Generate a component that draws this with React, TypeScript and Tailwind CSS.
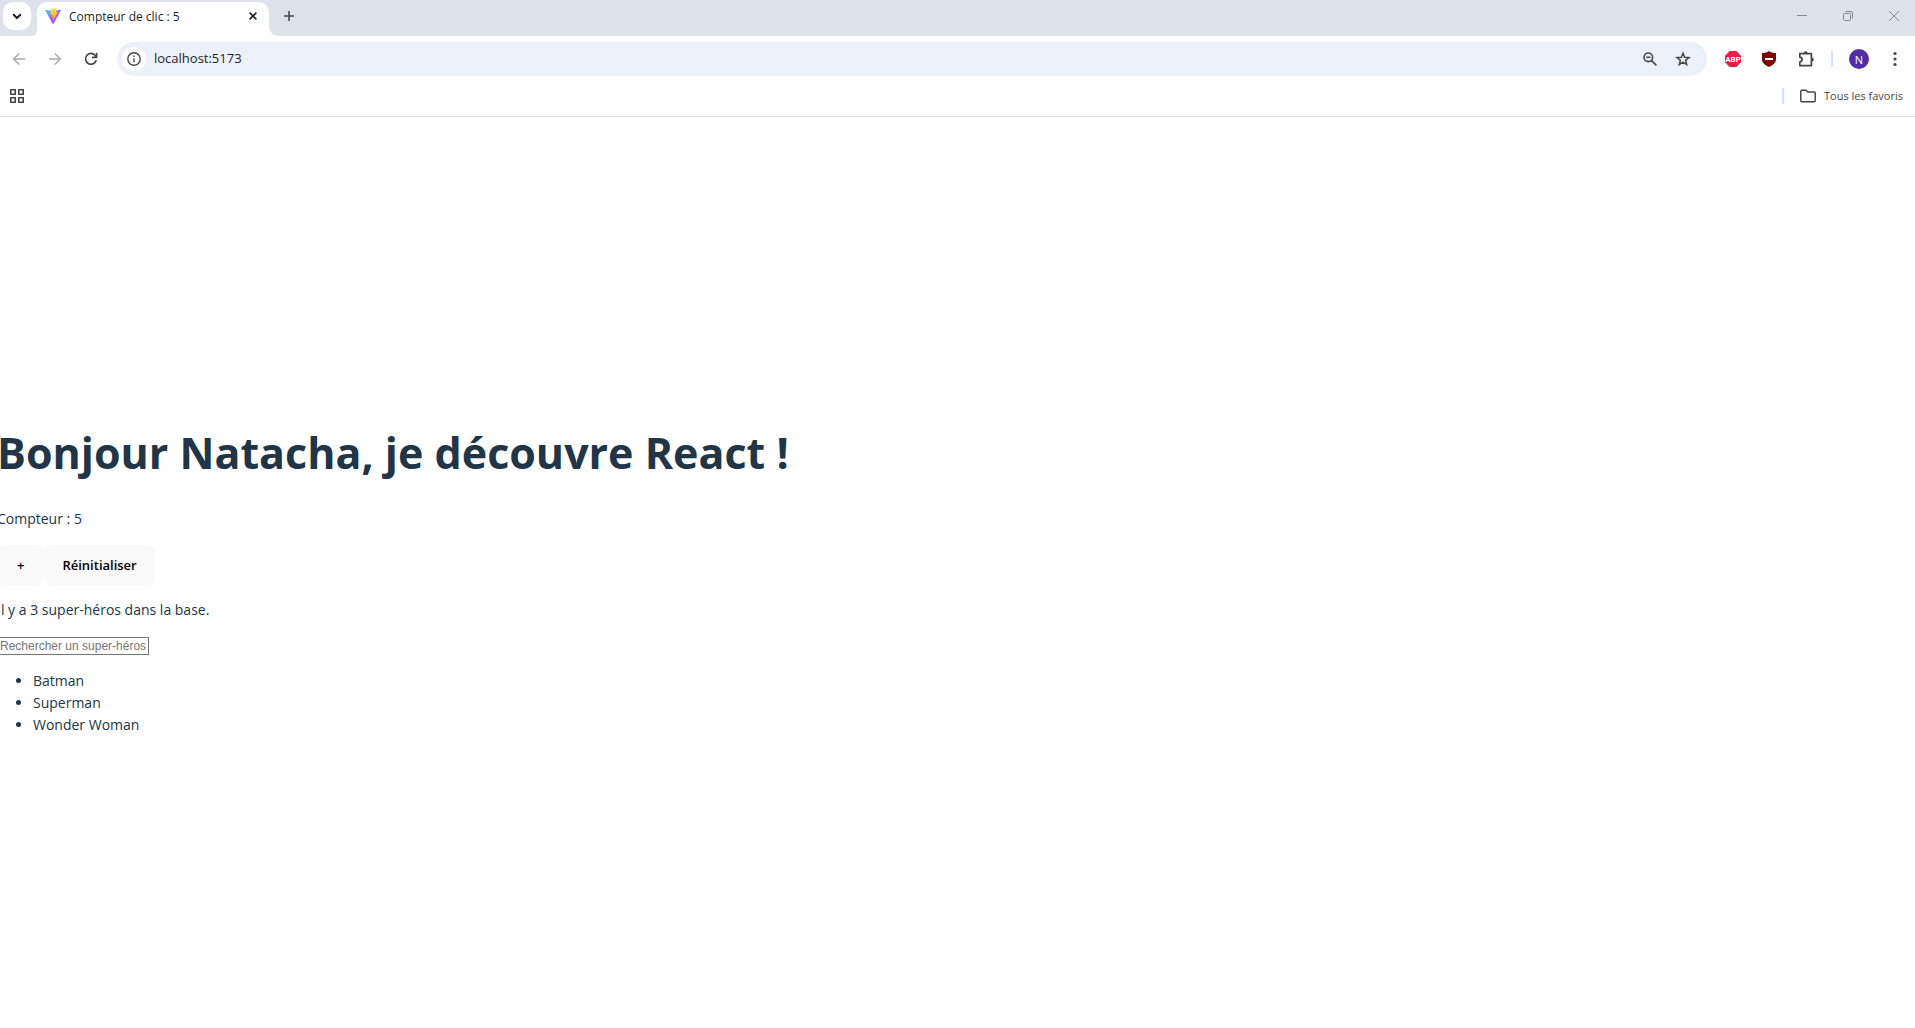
import { useState } from 'react';

const heroes = ['Batman', 'Superman', 'Wonder Woman'];

function ViteLogo() {
  return (
    <svg viewBox="0 0 256 257" className="size-4" aria-hidden="true">
      <defs>
        <linearGradient id="vite-a" x1="-.828%" x2="57.636%" y1="7.652%" y2="78.411%">
          <stop offset="0%" stopColor="#41D1FF" />
          <stop offset="100%" stopColor="#BD34FE" />
        </linearGradient>
        <linearGradient id="vite-b" x1="43.376%" x2="50.316%" y1="2.242%" y2="89.03%">
          <stop offset="0%" stopColor="#FFEA83" />
          <stop offset="8.333%" stopColor="#FFDD35" />
          <stop offset="100%" stopColor="#FFA800" />
        </linearGradient>
      </defs>
      <path
        fill="url(#vite-a)"
        d="M255.153 37.938L134.897 252.976c-2.483 4.44-8.862 4.466-11.382.048L.875 37.958c-2.746-4.814 1.371-10.646 6.827-9.67l120.385 21.517a6.537 6.537 0 0 0 2.322-.004l117.867-21.483c5.438-.991 9.574 4.796 6.877 9.62Z"
      />
      <path
        fill="url(#vite-b)"
        d="M185.432.063L96.44 17.501a3.268 3.268 0 0 0-2.634 3.014l-5.474 92.456a3.268 3.268 0 0 0 3.997 3.378l24.777-5.718c2.318-.535 4.413 1.507 3.936 3.838l-7.361 36.047c-.495 2.426 1.782 4.5 4.151 3.78l15.304-4.649c2.372-.72 4.652 1.36 4.15 3.788l-11.698 56.621c-.732 3.542 3.979 5.473 5.943 2.437l1.313-2.028l72.516-144.72c1.215-2.423-.88-5.186-3.54-4.672l-25.505 4.922c-2.396.462-4.435-1.77-3.759-4.114l16.646-57.705c.677-2.35-1.37-4.583-3.769-4.113Z"
      />
    </svg>
  );
}

function TabStrip() {
  return (
    <div className="flex h-9 items-start bg-[#dee2ea]">
      <button
        type="button"
        aria-label="Rechercher dans les onglets"
        className="mt-0.5 ml-[3px] flex size-7 items-center justify-center rounded-[10px] bg-white text-[#1f1f1f]"
      >
        <svg viewBox="0 0 10 10" className="size-2.5" fill="none" stroke="currentColor" strokeWidth="2">
          <path d="M1.2 3.2 5 7l3.8-3.8" />
        </svg>
      </button>
      <svg viewBox="0 0 6 8" className="h-2 w-1.5 self-end" aria-hidden="true">
        <path d="M6 0v8H0C4 8 6 5 6 0Z" fill="#fff" />
      </svg>
      <div className="mt-0.5 flex h-[34px] w-58 items-start rounded-t-[10px] bg-white pl-2">
        <div className="flex h-7 flex-1 items-center">
          <ViteLogo />
          <span className="ml-2 flex-1 pt-0.5 text-xs text-[#1f1f1f]">Compteur de clic : 5</span>
          <button
            type="button"
            aria-label="Fermer l'onglet"
            className="mr-2 flex size-4 items-center justify-center text-[#1f1f1f]"
          >
            <svg viewBox="0 0 8 8" className="size-2" fill="none" stroke="currentColor" strokeWidth="1.6">
              <path d="m.6.6 6.8 6.8M7.4.6.6 7.4" />
            </svg>
          </button>
        </div>
      </div>
      <svg viewBox="0 0 10 10" className="size-2.5 self-end" aria-hidden="true">
        <path d="M0 0v10h10C4 10 0 6 0 0Z" fill="#fff" />
      </svg>
      <button
        type="button"
        aria-label="Nouvel onglet"
        className="mt-0.5 flex h-7 w-5 items-center justify-center text-[#474747]"
      >
        <svg viewBox="0 0 10 10" className="size-2.5" fill="none" stroke="currentColor" strokeWidth="1.6">
          <path d="M5 0v10M0 5h10" />
        </svg>
      </button>
      <div className="-mr-0.5 ml-auto flex h-8 text-[#868a90]">
        <button type="button" aria-label="Réduire" className="flex w-[46px] items-center justify-center">
          <svg viewBox="0 0 10 10" className="size-2.5" fill="none" stroke="currentColor">
            <path d="M0 4.5h10" />
          </svg>
        </button>
        <button type="button" aria-label="Restaurer" className="flex w-[46px] items-center justify-center">
          <svg viewBox="0 0 10 10" className="size-2.5" fill="none" stroke="currentColor">
            <rect x=".5" y="2.5" width="7" height="7" rx="1" />
            <path d="M2.5.5H8A1.5 1.5 0 0 1 9.5 2v5.5" />
          </svg>
        </button>
        <button type="button" aria-label="Fermer" className="flex w-[46px] items-center justify-center">
          <svg viewBox="0 0 10 10" className="size-2.5" fill="none" stroke="currentColor">
            <path d="m0 0 10 10M10 0 0 10" />
          </svg>
        </button>
      </div>
    </div>
  );
}

function Toolbar() {
  return (
    <div className="flex h-[46px] items-center pr-[18px] pl-3 text-[#474747]">
      <button type="button" aria-label="Précédent" className="text-[#acacac]">
        <svg viewBox="0 0 14 14" className="size-3.5" fill="none" stroke="currentColor" strokeWidth="1.6">
          <path d="M13 7H2M7.2 1.5 1.7 7l5.5 5.5" />
        </svg>
      </button>
      <button type="button" aria-label="Suivant" className="ml-[22px] text-[#acacac]">
        <svg viewBox="0 0 14 14" className="size-3.5" fill="none" stroke="currentColor" strokeWidth="1.6">
          <path d="M1 7h11M6.8 1.5 12.3 7l-5.5 5.5" />
        </svg>
      </button>
      <button type="button" aria-label="Actualiser" className="ml-[22px]">
        <svg viewBox="0 0 14 14" className="size-3.5" fill="none" stroke="currentColor" strokeWidth="1.7">
          <path d="M12.2 8.2A5.4 5.4 0 1 1 11 3.2l1.6 1.6M12.6.8v4.6H8" />
        </svg>
      </button>
      <div className="ml-[19px] flex h-[34px] flex-1 items-center rounded-full bg-[#ecf0f9] pr-4 pl-[5px]">
        <button
          type="button"
          aria-label="Informations sur le site"
          className="flex size-6 items-center justify-center rounded-full bg-white"
        >
          <svg viewBox="0 0 14 14" className="size-3.5" fill="none" stroke="currentColor" strokeWidth="1.4">
            <circle cx="7" cy="7" r="6.2" />
            <path d="M7 6.3v4M7 3.6v1.5" />
          </svg>
        </button>
        <input
          aria-label="Adresse"
          defaultValue="localhost:5173"
          className="ml-2 min-w-0 flex-1 bg-transparent text-[13px] text-[#1f1f1f] outline-none"
        />
        <button type="button" aria-label="Zoom">
          <svg viewBox="0 0 14 14" className="size-3.5" fill="none" stroke="currentColor" strokeWidth="1.6">
            <circle cx="5.3" cy="5.3" r="4.3" />
            <path d="m8.4 8.4 5 5M3.2 5.3h4.2" />
          </svg>
        </button>
        <button type="button" aria-label="Ajouter aux favoris" className="ml-[18px]">
          <svg viewBox="0 0 16 16" className="size-4" fill="none" stroke="currentColor" strokeWidth="1.5">
            <path d="m8 2.2 1.6 4 4.4.3-3.4 2.8 1.1 4.3L8 11.2l-3.7 2.4 1.1-4.3L2 6.5l4.4-.3Z" />
          </svg>
        </button>
      </div>
      <button type="button" aria-label="Adblock Plus" className="ml-[18px]">
        <svg viewBox="0 0 16 16" className="size-4">
          <path d="M4.7 0h6.6L16 4.7v6.6L11.3 16H4.7L0 11.3V4.7Z" fill="#ed1e45" />
          <text
            x="8"
            y="11"
            textAnchor="middle"
            fill="#fff"
            className="font-['Roboto',sans-serif] text-[8px] font-bold"
          >
            ABP
          </text>
        </svg>
      </button>
      <button type="button" aria-label="uBlock Origin" className="ml-5">
        <svg viewBox="0 0 16 16" className="size-4">
          <path d="M8 0c2 1.5 4 2 7 2v6c0 4-3 6-7 8-4-2-7-4-7-8V2c3 0 5-.5 7-2Z" fill="#800000" />
          <path d="M4 8h8" stroke="#fff" strokeWidth="2" />
        </svg>
      </button>
      <button type="button" aria-label="Extensions" className="ml-[21px]">
        <svg viewBox="0 0 17 17" className="size-[17px]" fill="none" stroke="currentColor" strokeWidth="1.7">
          <path d="M1.8 6.2V2.6h11.6v12H1.8V11c1.4-.2 2.3-1.1 2.3-2.4S3.2 6.4 1.8 6.2Z" strokeLinejoin="round" />
          <path d="M5.6 2.2a2 2 0 0 1 4 0ZM13.8 6.6a2 2 0 0 1 0 4Z" fill="currentColor" stroke="none" />
        </svg>
      </button>
      <span className="ml-4 h-4 w-0.5 bg-[#d3e3fd]" />
      <button
        type="button"
        aria-label="Profil"
        className="ml-4 flex size-5 items-center justify-center rounded-full bg-[#512da8] text-[11px] leading-none text-white"
      >
        N
      </button>
      <button type="button" aria-label="Menu" className="ml-6">
        <svg viewBox="0 0 4 16" className="h-4 w-1" fill="currentColor">
          <circle cx="2" cy="2.5" r="1.6" />
          <circle cx="2" cy="8" r="1.6" />
          <circle cx="2" cy="13.5" r="1.6" />
        </svg>
      </button>
    </div>
  );
}

function BookmarksBar() {
  return (
    <div className="flex h-[35px] items-start border-b border-[#e0e2e6] pr-3 pl-2.5 text-[#474747]">
      <button type="button" aria-label="Applications" className="flex h-7 items-center">
        <svg viewBox="0 0 14 14" className="size-3.5" fill="none" stroke="currentColor" strokeWidth="1.6">
          <path d="M.8.8h4.4v4.4H.8ZM8.8.8h4.4v4.4H8.8ZM.8 8.8h4.4v4.4H.8ZM8.8 8.8h4.4v4.4H8.8Z" />
        </svg>
      </button>
      <div className="ml-auto flex h-7 items-center">
        <span className="h-4 w-0.5 bg-[#d3e3fd]" />
        <button type="button" className="ml-4 flex items-center gap-2 text-[11px]">
          <svg viewBox="0 0 16 14" className="h-3.5 w-4" fill="none" stroke="currentColor" strokeWidth="1.5">
            <path d="M.8 2.2c0-.5.4-.9.9-.9h4.4l1.7 1.8h6.5c.5 0 .9.4.9.9v7.8c0 .5-.4.9-.9.9H1.7a.9.9 0 0 1-.9-.9Z" />
          </svg>
          Tous les favoris
        </button>
      </div>
    </div>
  );
}

export default function App() {
  const [count, setCount] = useState(5);
  const [search, setSearch] = useState('');
  const found = heroes.filter((hero) => hero.toLowerCase().includes(search.toLowerCase()));

  return (
    <div className="flex min-h-screen flex-col overflow-hidden bg-white font-['Open_Sans','Noto_Sans',sans-serif]">
      <header>
        <TabStrip />
        <Toolbar />
        <BookmarksBar />
      </header>
      <main className="-ml-[3px] flex flex-1 flex-col items-start justify-center text-sm leading-[22px] text-[#213547]">
        <h1 className="mt-8 mb-[30px] text-[43px] leading-[50px] font-bold">
          Bonjour Natacha, je découvre React !
        </h1>
        <p className="mb-[15px]">Compteur : {count}</p>
        <div className="flex text-[13px] font-semibold text-black">
          <button type="button" onClick={() => setCount(count + 1)} className="h-10 rounded-lg bg-[#f9f9f9] px-5">
            +
          </button>
          <button type="button" onClick={() => setCount(0)} className="h-10 rounded-lg bg-[#f9f9f9] px-[18px]">
            Réinitialiser
          </button>
        </div>
        <p className="mt-3.5 mb-4">Il y a {heroes.length} super-héros dans la base.</p>
        <input
          type="text"
          aria-label="Rechercher un super-héros"
          placeholder="Rechercher un super-héros"
          value={search}
          onChange={(event) => setSearch(event.target.value)}
          className="h-[18px] w-[152px] border border-[#767676] px-0.5 font-['Liberation_Sans',sans-serif] text-xs text-black placeholder:text-[#757575]"
        />
        <ul className="mt-[15px] mb-3.5 list-disc pl-9">
          {found.map((hero) => (
            <li key={hero}>{hero}</li>
          ))}
        </ul>
      </main>
    </div>
  );
}
